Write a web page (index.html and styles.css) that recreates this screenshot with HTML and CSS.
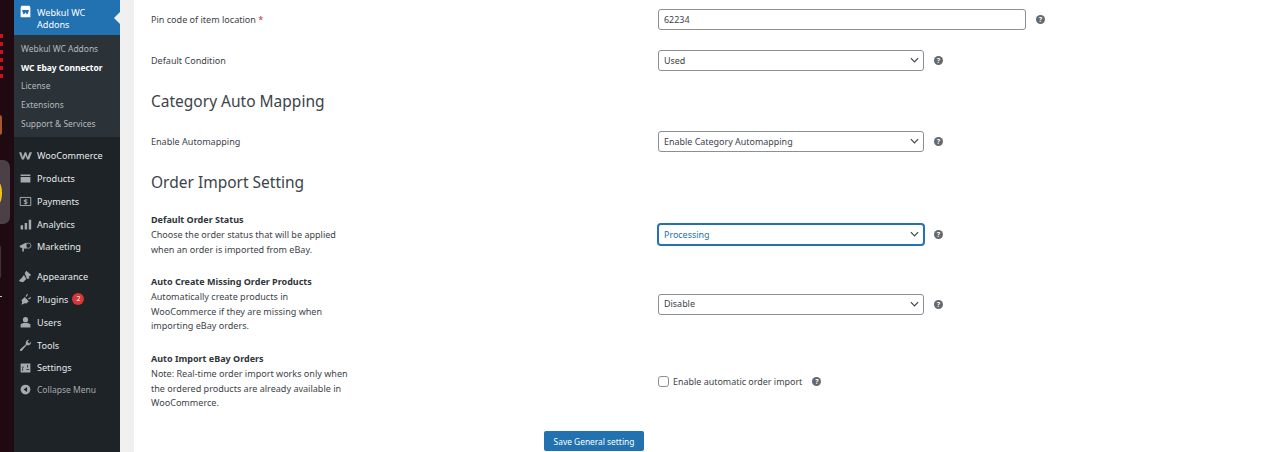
FILE: index.html
```html
<!DOCTYPE html>
<html lang="en">
<head>
<meta charset="utf-8">
<title>WC Ebay Connector</title>
<link rel="stylesheet" href="styles.css">
</head>
<body>
<div class="desk">
  <div class="strip-art" aria-hidden="true">
    <span class="dots"></span>
    <span class="orange"></span>
    <span class="dock"></span>
    <span class="dock second"></span>
    <span class="tick"></span>
  </div>
  <nav class="side">
    <div class="current">
      <svg class="ico" viewBox="0 0 16 16"><path fill="#fff" d="M2 3.500 3 1h10l1 2.500V15H2z"/><path fill="#2271b1" d="M4 6h8v1.500l-1.500 4h-1L8 9l-1.500 2.500h-1L4 7.500z"/></svg>
      <span>Webkul WC Addons</span>
    </div>
    <ul class="sub">
      <li>Webkul WC Addons</li>
      <li class="on">WC Ebay Connector</li>
      <li>License</li>
      <li>Extensions</li>
      <li>Support &amp; Services</li>
    </ul>
    <ul class="menu first">
      <li><svg class="ico" viewBox="0 0 16 16"><path fill="#a7aaad" d="M0 4h3l1.500 6L7 4h2l1.500 6L13 4h3l-3.500 9h-2.500L8 8l-2 5H3.500z"/></svg>WooCommerce</li>
      <li><svg class="ico" viewBox="0 0 16 16"><path fill="#a7aaad" d="M2 3h12v2H2zM2 6h12v7H2z"/></svg>Products</li>
      <li><svg class="ico" viewBox="0 0 16 16"><path fill="none" stroke="#a7aaad" stroke-width="1.200" d="M1.500 3h13v10h-13z"/><text x="8" y="11.500" text-anchor="middle" class="dollar">$</text></svg>Payments</li>
      <li><svg class="ico" viewBox="0 0 16 16"><path fill="#a7aaad" d="M2 9h3v5H2zM7 6h3v8H7zM12 2h3v12h-3z"/></svg>Analytics</li>
      <li><svg class="ico" viewBox="0 0 16 16"><path fill="#a7aaad" d="M1 7l8-4v8l-3-.700V14H4v-4.200L1 9z"/><circle cx="11.500" cy="7" r="3.200" fill="none" stroke="#a7aaad"/></svg>Marketing</li>
    </ul>
    <ul class="menu second">
      <li><svg class="ico" viewBox="0 0 16 16"><path fill="#a7aaad" d="M7 4l2-3 6 5-3 2 1 2-3 1-3-7zM6 6l3 5-4 4-4-1-1-1 3-3z"/></svg>Appearance</li>
      <li><svg class="ico" viewBox="0 0 16 16"><path fill="#a7aaad" d="M3 14l1-3-1-2 4-4 5 5-3 3-2-.500-3 1.500zM8 4l2-3 1 1-2 3zM11 7l3-2 1 1-3 2z"/></svg>Plugins<b class="badge">2</b></li>
      <li><svg class="ico" viewBox="0 0 16 16"><circle cx="8" cy="4.500" r="3.200" fill="#a7aaad"/><path fill="#a7aaad" d="M2 10l3-1.500h6L14 10v4H2z"/></svg>Users</li>
      <li><svg class="ico" viewBox="0 0 16 16"><path fill="#a7aaad" d="M15 3.500a4 4 0 0 1-5.500 4L3.500 14.500a1.400 1.400 0 0 1-2-2L8.500 6.500A4 4 0 0 1 12.500 1L10.500 3.500l2 2z"/></svg>Tools</li>
      <li><svg class="ico" viewBox="0 0 16 16"><path fill="#a7aaad" fill-rule="evenodd" d="M2 3h12v11H2zM4 9v3h1V9zM10 5v3h1V5zM6 7H3.500v1H6zM12.500 10H9v1h3.500z"/></svg>Settings</li>
      <li class="collapse"><svg class="ico" viewBox="0 0 16 16"><circle cx="8" cy="8" r="6" fill="#a7aaad"/><path fill="#1d2327" d="M10 5v6L5.500 8z"/></svg>Collapse Menu</li>
    </ul>
  </nav>
  <div class="gutter"></div>
  <main class="main">
    <div class="row row-pin">
      <label class="lab one">Pin code of item location <i>*</i></label>
      <div class="ctl"><input class="field wide" value="62234"><span class="q">?</span></div>
    </div>
    <div class="row row-cond">
      <label class="lab one">Default Condition</label>
      <div class="ctl"><div class="field sel">Used<svg class="chev" viewBox="0 0 10 6"><path d="M1 1l4 4 4-4"/></svg></div><span class="q">?</span></div>
    </div>
    <h2 class="head h-cat">Category Auto Mapping</h2>
    <div class="row row-map">
      <label class="lab one">Enable Automapping</label>
      <div class="ctl"><div class="field sel">Enable Category Automapping<svg class="chev" viewBox="0 0 10 6"><path d="M1 1l4 4 4-4"/></svg></div><span class="q">?</span></div>
    </div>
    <h2 class="head h-ord">Order Import Setting</h2>
    <div class="row row-status">
      <div class="lab"><strong>Default Order Status</strong>Choose the order status that will be applied<br>when an order is imported from eBay.</div>
      <div class="ctl"><div class="field sel focus">Processing<svg class="chev" viewBox="0 0 10 6"><path d="M1 1l4 4 4-4"/></svg></div><span class="q">?</span></div>
    </div>
    <div class="row row-create">
      <div class="lab"><strong>Auto Create Missing Order Products</strong>Automatically create products in<br>WooCommerce if they are missing when<br>importing eBay orders.</div>
      <div class="ctl"><div class="field sel">Disable<svg class="chev" viewBox="0 0 10 6"><path d="M1 1l4 4 4-4"/></svg></div><span class="q">?</span></div>
    </div>
    <div class="row row-auto">
      <div class="lab"><strong>Auto Import eBay Orders</strong>Note: Real-time order import works only when<br>the ordered products are already available in<br>WooCommerce.</div>
      <div class="ctl"><span class="check"></span><span class="chk-label">Enable automatic order import</span><span class="q">?</span></div>
    </div>
    <div class="actions"><button class="save">Save General setting</button></div>
  </main>
</div>
</body>
</html>
```
FILE: styles.css
```css
* { box-sizing: border-box; }
html, body { margin: 0; height: 452px; overflow: hidden; background: #fff; }
body { font-family: "Noto Sans", "Open Sans", sans-serif; font-size: 9.050px; color: #3c434a; }
ul { list-style: none; margin: 0; padding: 0; }

.desk { display: flex; height: 452px; }

.strip-art { width: 14px; flex: none; background: #1f0a12; position: relative; overflow: hidden; }
.dots { position: absolute; left: 0; top: 34px; width: 3px; height: 46px; background: repeating-linear-gradient(#c8141e 0 4px, transparent 4px 8px); }
.orange { position: absolute; left: -3px; top: 115px; width: 5px; height: 20px; border-radius: 3px; background: #a8582a; }
.dock { position: absolute; left: -12px; top: 160px; width: 22px; height: 64px; border-radius: 7px; background: #4a4045; }
.dock::after { content: ""; position: absolute; right: 8px; top: 23px; width: 6px; height: 20px; border-radius: 50%; background: #f0c419; }
.dock.second { top: 245px; height: 34px; width: 13px; border-radius: 3px; background: #3f3439; }
.dock.second::after { display: none; }
.tick { position: absolute; left: 0; top: 296px; width: 2px; height: 1px; background: #c9c4c6; }

.side { width: 106px; flex: none; background: #1d2327; color: #f0f0f1; }
.current { height: 35px; background: #2271b1; color: #fff; display: flex; align-items: center; gap: 5px; padding: 0 4px 0 5px; font-size: 9.100px; line-height: 12px; position: relative; }
.current .ico { margin: 0; width: 13px; height: 13px; align-self: flex-start; margin-top: 5px; }
.current span { margin-top: 2px; width: 70px; }
.current::after { content: ""; position: absolute; right: 0; top: 12px; border: 6px solid transparent; border-right-color: #f0f0f1; border-left-width: 0; }

.sub { background: #2c3338; height: 102px; padding-top: 5px; }
.sub li { height: 18.700px; line-height: 18.700px; padding-left: 7px; font-size: 8.450px; color: #b4b9be; white-space: nowrap; }
.sub li.on { color: #fff; font-weight: 700; }

.menu li { height: 22.800px; display: flex; align-items: center; padding-left: 5px; font-size: 9.100px; color: #e6e8ea; white-space: nowrap; }
.menu.first { margin-top: 7.300px; }
.menu.second { margin-top: 7px; }
.ico { width: 13px; height: 13px; margin-right: 5px; flex: none; }
.dollar { font-size: 9px; font-weight: 700; fill: #a7aaad; font-family: "Noto Sans", sans-serif; }
.menu li.collapse { color: #a7aaad; font-size: 8.500px; height: 21px; }
.badge { width: 12px; height: 12px; border-radius: 50%; background: #d63638; color: #fff; font-size: 7px; line-height: 12px; text-align: center; margin-left: 4px; font-weight: 400; }

.gutter { width: 14px; flex: none; background: #f0f0f1; }

.main { flex: 1; background: #fff; padding-left: 17px; display: flex; flex-direction: column; }
.row { display: grid; grid-template-columns: 507px 1fr; align-items: center; }
.lab { line-height: 14.500px; }
.lab.one { line-height: 15px; }
.lab strong { display: block; color: #2f353a; font-weight: 700; font-size: 9px; line-height: 15px; margin-bottom: 1px; }
.lab i { color: #c0324a; font-style: normal; }
.ctl { display: flex; align-items: center; }

.field { height: 21px; border: 1px solid #8c8f94; border-radius: 3px; background: #fff; color: #3c434a; font: inherit; font-size: 8.950px; padding: 0 5px 1px; }
.wide { width: 368px; }
.sel { width: 266px; display: flex; align-items: center; justify-content: space-between; padding-right: 4px; }
.focus { border-color: #2271b1; box-shadow: 0 0 0 1px #2271b1; color: #2271b1; }
.chev { width: 9px; height: 6px; fill: none; stroke: #3c434a; stroke-width: 1.300; }
.q { width: 9px; height: 9px; border-radius: 50%; background: #646970; color: #fff; font-size: 7px; font-weight: 700; line-height: 9px; text-align: center; margin-left: 10px; flex: none; }
.check { width: 11px; height: 11px; border: 1px solid #8c8f94; border-radius: 3px; background: #fff; margin-right: 4px; }
.chk-label { font-size: 8.950px; }

.head { margin: 0; font-weight: 400; font-size: 15.500px; line-height: 22px; color: #3c434a; }

.row-pin { margin-top: 9px; height: 21px; }
.row-cond { margin-top: 20px; height: 21px; }
.h-cat { margin-top: 19px; }
.row-map { margin-top: 19px; height: 21px; }
.h-ord { margin-top: 19px; }
.row-status { margin-top: 19px; height: 45px; }
.row-create { margin-top: 17px; height: 60px; }
.row-auto { margin-top: 17px; height: 60px; }

.actions { margin-top: 20px; padding-left: 393px; }
.save { width: 100px; height: 20px; padding: 0; border: 0; border-radius: 2px; background: #2271b1; color: #fff; font: inherit; font-size: 8.400px; }
```
